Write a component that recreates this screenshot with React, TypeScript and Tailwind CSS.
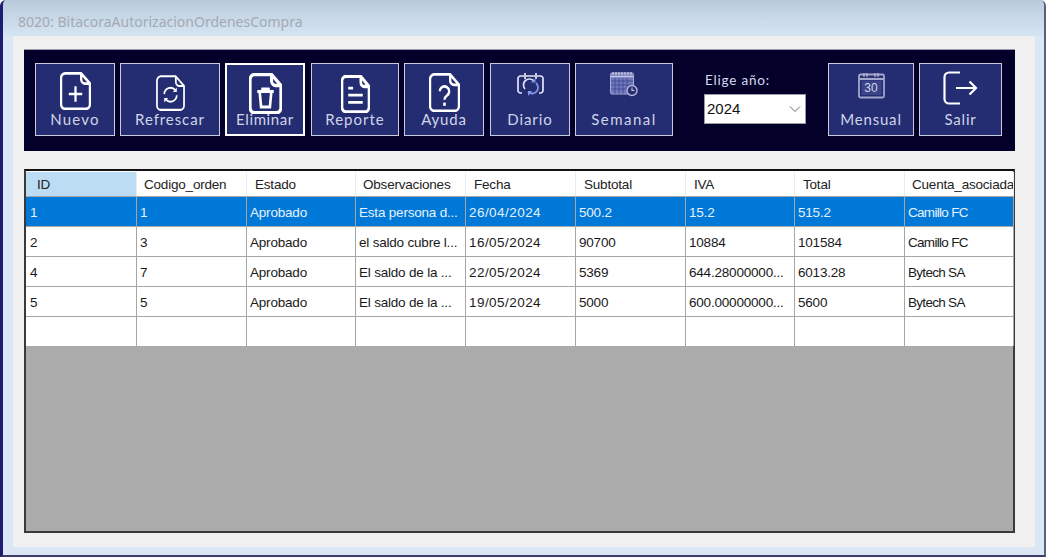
import React from 'react';

const DocShape = ({ w = 2.300 }: { w?: number }) => (
  <path
    d="M5 1.200h15.500L29 9.700V27a4 4 0 0 1-4 4H5a4 4 0 0 1-4-4V5.200a4 4 0 0 1 4-4ZM20.500 1.200V6a3.700 3.700 0 0 0 3.700 3.700H29"
    fill="none"
    stroke="#fff"
    strokeWidth={w}
    strokeLinejoin="round"
  />
);

const NuevoIcon = () => (
  <svg width="31" height="38" viewBox="0 0 30 32" preserveAspectRatio="none">
    <DocShape />
    <path d="M15 12v13M8.500 18.500h13" stroke="#fff" strokeWidth="2.200" fill="none" />
  </svg>
);

const RefrescarIcon = () => (
  <svg width="29" height="36" viewBox="0 0 30 32" preserveAspectRatio="none">
    <DocShape w={1.800} />
    <path d="M8.500 17a6.500 6 0 0 1 11.500-3.500M21.500 18a6.500 6 0 0 1-11.500 3.500" fill="none" stroke="#fff" strokeWidth="1.700" />
    <path d="M21.500 11v4h-4ZM8.500 24.500v-4h4Z" fill="#fff" />
  </svg>
);

const EliminarIcon = () => (
  <svg width="33" height="41" viewBox="0 0 30 32" preserveAspectRatio="none">
    <DocShape w={2.800} />
    <path d="M7.500 14.500h15M12 14.500l.3-2h5.400l.3 2M9.700 14.500l1.300 12h8l1.300-12" fill="none" stroke="#fff" strokeWidth="2.400" />
  </svg>
);

const ReporteIcon = () => (
  <svg width="29" height="38" viewBox="0 0 30 32" preserveAspectRatio="none">
    <DocShape w={2.800} />
    <path d="M7.500 11h5M7.500 17h15M7.500 23h15" stroke="#fff" strokeWidth="2.400" fill="none" />
  </svg>
);

const AyudaIcon = () => (
  <svg width="31" height="39" viewBox="0 0 30 32" preserveAspectRatio="none">
    <DocShape />
    <path d="M10.500 15a4.500 4 0 1 1 7 3.300c-1.600 1-2.500 1.700-2.500 3.700" fill="none" stroke="#fff" strokeWidth="2.200" />
    <rect x="13.700" y="24.300" width="2.600" height="2.600" fill="#fff" />
  </svg>
);

const DiarioIcon = () => (
  <svg width="27" height="26" viewBox="0 0 27 26">
    <path d="M7 4H3.500A2.500 2.500 0 0 0 1 6.500v12A2.500 2.500 0 0 0 3.500 21H5M20 4h3.500A2.500 2.500 0 0 1 26 6.500v12a2.500 2.500 0 0 1-2.500 2.500H22M9 4h9" fill="none" stroke="#e4e6f4" strokeWidth="1.700" />
    <path d="M8 1v6M19 1v6" stroke="#e4e6f4" strokeWidth="1.700" />
    <path d="M8 17a6 6 0 0 1 9-8" fill="none" stroke="#e4e6f4" strokeWidth="1.700" />
    <path d="M19 11a6 6 0 0 1-8 9" fill="none" stroke="#7f97e6" strokeWidth="1.800" />
    <path d="M18.500 6v4.500H14ZM11 24v-5h4Z" fill="#7f97e6" />
  </svg>
);

const SemanalIcon = () => (
  <svg width="28" height="26" viewBox="0 0 28 26">
    <rect x="0.500" y="2" width="23" height="21" rx="1.500" fill="#6f78bd" stroke="#a9acd4" />
    <path d="M1 5.500h22" stroke="#c4c6e2" strokeWidth="1.500" />
    <path d="M3 1v3M6 1v3M9 1v3M12 1v3M15 1v3M18 1v3M21 1v3" stroke="#c4c6e2" strokeWidth="1.300" />
    <path d="M1 10h22M1 14h22M1 18h22M5 7v16M9 7v16M13 7v16M17 7v16" stroke="#3d4692" strokeWidth="0.800" />
    <circle cx="22" cy="19.500" r="5" fill="#2a2f73" stroke="#b5b8da" strokeWidth="1.400" />
    <path d="M22 16.500v3h2.500" fill="none" stroke="#c9cbe5" strokeWidth="1.100" />
  </svg>
);

const MensualIcon = () => (
  <div className="relative w-[27px] h-[27px]">
    <svg width="27" height="27" viewBox="0 0 27 27" className="absolute inset-0">
      <rect x="1" y="2.500" width="25" height="23" rx="1.500" fill="none" stroke="#a3a6c8" strokeWidth="1.800" />
      <path d="M1 7h25" stroke="#a3a6c8" strokeWidth="2.200" />
      <path d="M6 1v4M9 1v4M17 1v4M20 1v4" stroke="#b9bcd9" strokeWidth="1.200" />
      <rect x="3.500" y="9" width="20" height="14" fill="#3b4488" />
    </svg>
    <span className="absolute left-0 right-0 top-[9px] text-center text-[12px] leading-[14px] text-[#d5d7ea] font-['Liberation_Sans',sans-serif]">30</span>
  </div>
);

const SalirIcon = () => (
  <svg width="35" height="34" viewBox="0 0 35 34">
    <path d="M17 1.500H6a4.500 4.500 0 0 0-4.500 4.500v22A4.500 4.500 0 0 0 6 32.500h11" fill="none" stroke="#fff" strokeWidth="2.200" />
    <path d="M13 17h20M26.500 10.500 33 17l-6.500 6.500" fill="none" stroke="#fff" strokeWidth="2.200" />
  </svg>
);

type Tool = {
  label: string;
  width: string;
  gap: string;
  icon: React.ReactNode;
  iconBox: string;
  labelClass: string;
  active?: boolean;
};

const leftTools: Tool[] = [
  { label: 'Nuevo', width: 'w-[80px]', gap: 'mr-[5px]', icon: <NuevoIcon />, iconBox: 'pt-[8px]', labelClass: 'tracking-[1.200px]' },
  { label: 'Refrescar', width: 'w-[100px]', gap: 'mr-[5px]', icon: <RefrescarIcon />, iconBox: 'pt-[11px]', labelClass: 'tracking-[0.900px]' },
  { label: 'Eliminar', width: 'w-[80px]', gap: 'mr-[6px]', icon: <EliminarIcon />, iconBox: 'pt-[8px]', labelClass: 'tracking-[0.600px]', active: true },
  { label: 'Reporte', width: 'w-[88px]', gap: 'mr-[5px]', icon: <ReporteIcon />, iconBox: 'pt-[11px]', labelClass: 'tracking-[1px]' },
  { label: 'Ayuda', width: 'w-[80px]', gap: 'mr-[6px]', icon: <AyudaIcon />, iconBox: 'pt-[9px]', labelClass: 'tracking-[0.800px]' },
  { label: 'Diario', width: 'w-[80px]', gap: 'mr-[5px]', icon: <DiarioIcon />, iconBox: 'pt-[8px]', labelClass: 'tracking-[0.900px]' },
  { label: 'Semanal', width: 'w-[98px]', gap: 'mr-[31px]', icon: <SemanalIcon />, iconBox: 'pt-[7px]', labelClass: 'tracking-[1.500px]' },
];

const rightTools: Tool[] = [
  { label: 'Mensual', width: 'w-[86px]', gap: 'mr-[5px]', icon: <MensualIcon />, iconBox: 'pt-[8px]', labelClass: 'tracking-[0.800px]' },
  { label: 'Salir', width: 'w-[83px]', gap: '', icon: <SalirIcon />, iconBox: 'pt-[7px]', labelClass: 'tracking-[0.800px]' },
];

const ToolButton = ({ tool }: { tool: Tool }) => (
  <div
    className={`relative ${tool.width} ${tool.gap} h-[73px] shrink-0 bg-[#252d72] flex flex-col items-center ${tool.iconBox} ${
      tool.active ? 'border-2 border-white' : 'border border-[#c9cbdd]'
    }`}
  >
    {tool.icon}
    <span
      className={`absolute left-0 right-0 text-center text-[15px] leading-[18px] text-[#d0d4ea] font-['Lato',sans-serif] ${tool.labelClass} ${
        tool.active ? 'bottom-[6px]' : 'bottom-[7px]'
      }`}
    >
      {tool.label}
    </span>
  </div>
);

const columns = [
  { name: 'ID', w: 'w-[111px]', pad: 'pl-[11px]', cell: 'pl-[4px]' },
  { name: 'Codigo_orden', w: 'w-[110px]', pad: 'pl-[7px]', cell: 'pl-[3px]' },
  { name: 'Estado', w: 'w-[109px]', pad: 'pl-[8px]', cell: 'pl-[3px]' },
  { name: 'Observaciones', w: 'w-[110px]', pad: 'pl-[7px]', cell: 'pl-[3px]' },
  { name: 'Fecha', w: 'w-[110px]', pad: 'pl-[8px]', cell: 'pl-[3px] tracking-[0.450px]' },
  { name: 'Subtotal', w: 'w-[110px]', pad: 'pl-[8px]', cell: 'pl-[3px]' },
  { name: 'IVA', w: 'w-[109px]', pad: 'pl-[8px]', cell: 'pl-[3px]' },
  { name: 'Total', w: 'w-[110px]', pad: 'pl-[8px]', cell: 'pl-[3px]' },
  { name: 'Cuenta_asociada', w: 'w-[109px]', pad: 'pl-[7px]', cell: 'pl-[3px] tracking-[-0.700px]' },
];

const rows = [
  ['1', '1', 'Aprobado', 'Esta persona d...', '26/04/2024', '500.2', '15.2', '515.2', 'Camillo FC'],
  ['2', '3', 'Aprobado', 'el saldo cubre l...', '16/05/2024', '90700', '10884', '101584', 'Camillo FC'],
  ['4', '7', 'Aprobado', 'El saldo de la ...', '22/05/2024', '5369', '644.28000000...', '6013.28', 'Bytech SA'],
  ['5', '5', 'Aprobado', 'El saldo de la ...', '19/05/2024', '5000', '600.00000000...', '5600', 'Bytech SA'],
  ['', '', '', '', '', '', '', '', ''],
];

const gridFont = "font-['Liberation_Sans',sans-serif] text-[13.500px] tracking-[-0.200px]";

export default function App() {
  return (
    <div className="w-[1046px] h-[557px] overflow-hidden rounded-t-[6px] bg-[#dbe7f4] border-l-[3px] border-r-2 border-b-2 border-l-[#1c1c70] border-r-[#5a5f80] border-b-[#3b3d66]">
      {/* title bar */}
      <div className="h-[36px] pl-[15px] pt-[13px] bg-gradient-to-b from-[#b9cbdb] to-[#d6e5f4] text-[14px] leading-[18px] text-[#a3aab3] font-['Noto_Sans',sans-serif]">
        8020: BitacoraAutorizacionOrdenesCompra
      </div>

      <div className="ml-[10px] w-[1022px] h-[511px] bg-[#f0f0f0] pt-[13px] pl-[11px]">
        {/* toolbar */}
        <div className="w-[991px] h-[102px] bg-[#03002a] border-t border-[#9a9aa8] pt-[13px] pl-[11px] flex">
          {leftTools.map((t) => (
            <ToolButton key={t.label} tool={t} />
          ))}
          <div className="w-[102px] mr-[22px] shrink-0 pt-[9px]">
            <div className="pl-[1px] text-[13.500px] leading-[16px] tracking-[0.800px] text-[#d6d9ec] font-['Lato',sans-serif]">Elige año:</div>
            <div className="mt-[6px] h-[30px] bg-white border border-[#9a9aa5] flex items-center justify-between pl-[2px] pr-[4px] text-[15px] text-[#111] font-['Liberation_Sans',sans-serif]">
              <span>2024</span>
              <svg width="12" height="8" viewBox="0 0 12 8">
                <path d="M1 1.500 6 6.500l5-5" fill="none" stroke="#666" strokeWidth="1" />
              </svg>
            </div>
          </div>
          {rightTools.map((t) => (
            <ToolButton key={t.label} tool={t} />
          ))}
        </div>

        {/* grid */}
        <div className={`mt-[18px] w-[991px] h-[364px] bg-[#ababab] border-2 border-[#3a3a3a] border-t-[#111] ${gridFont}`}>
          <div className="flex h-[25px] bg-white pt-[1px]">
            {columns.map((c, i) => (
              <div
                key={c.name}
                className={`${c.w} ${c.pad} shrink-0 overflow-hidden whitespace-nowrap leading-[26px] text-[#222] border-r border-[#ececec] ${
                  i === 0 ? 'bg-[#bcdcf4]' : 'bg-white'
                }`}
              >
                {c.name}
              </div>
            ))}
          </div>
          {rows.map((row, r) => (
            <div key={r} className={`flex h-[30px] ${r === 0 ? 'bg-[#0078d7] text-[#e6f1fb]' : 'bg-white text-[#1a1a1a]'}`}>
              {row.map((val, i) => (
                <div
                  key={i}
                  className={`${columns[i].w} ${columns[i].cell} shrink-0 overflow-hidden whitespace-nowrap leading-[31px] border-t border-r border-[#a6a6a6]`}
                >
                  {val}
                </div>
              ))}
            </div>
          ))}
        </div>
      </div>
    </div>
  );
}
